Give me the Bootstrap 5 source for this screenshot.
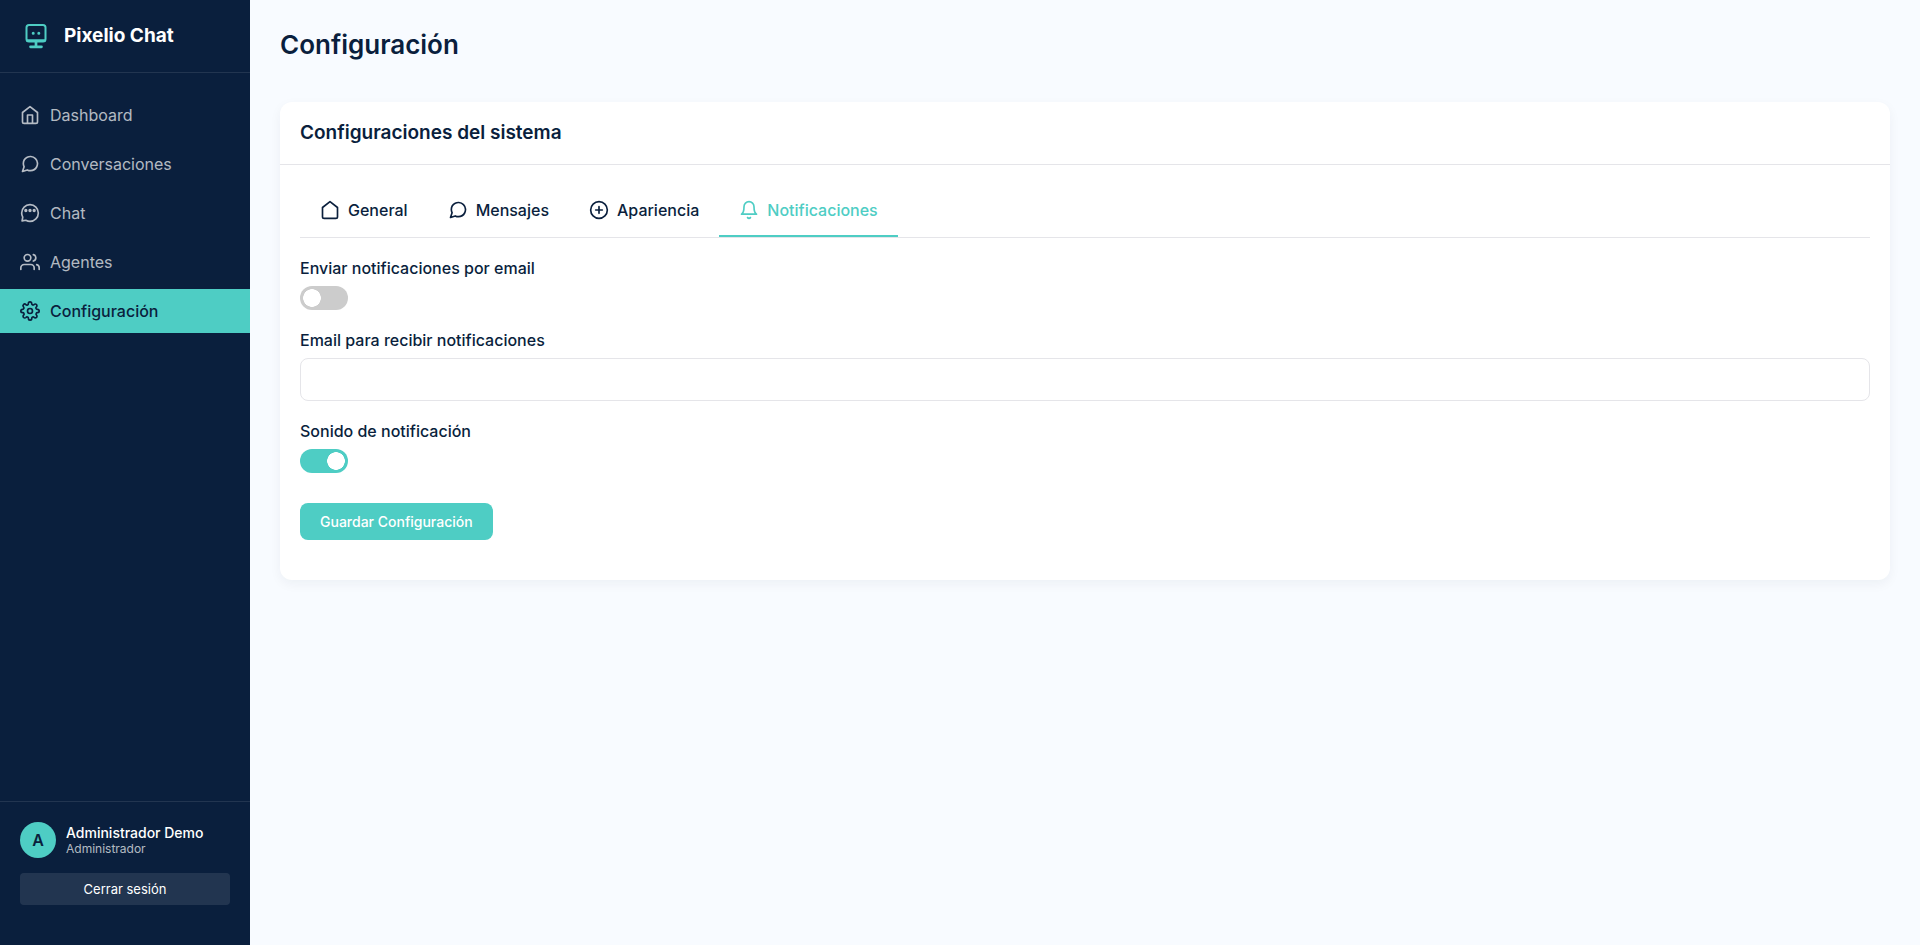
<!DOCTYPE html>
<html lang="es">
<head>
<meta charset="utf-8">
<meta name="viewport" content="width=device-width, initial-scale=1">
<title>Configuración - Pixelio Chat</title>
<link href="https://cdn.jsdelivr.net/npm/bootstrap@5.3.0/dist/css/bootstrap.min.css" rel="stylesheet">
<style>
:root { --navy: #0a1f3d; --teal: #4ecdc4; --line: #e5e5e9; }
body { font-family: Inter, "Liberation Sans", sans-serif; font-size: 16px; line-height: 24px; color: var(--navy); background: #f8fbff; }
svg { fill: none; stroke: currentColor; stroke-width: 2; stroke-linecap: round; stroke-linejoin: round; flex-shrink: 0; }
.sidebar { width: 250px; background: var(--navy); padding-bottom: 20px; }
.brand { height: 73px; padding: 0 20px; gap: 12px; border-bottom: 1px solid rgba(255,255,255,.1); }
.brand svg { color: var(--teal); }
.brand-name { font-size: 19px; font-weight: 700; color: #fff; }
.menu { gap: 5px; padding: 20px 0; }
.menu .nav-link { height: 44px; padding: 0 20px; gap: 10px; color: rgba(255,255,255,.7); }
.menu .nav-link.active { background: var(--teal); color: var(--navy); font-weight: 500; }
.account { padding: 20px; border-top: 1px solid rgba(255,255,255,.1); }
.profile { gap: 10px; }
.avatar { width: 36px; height: 36px; background: var(--teal); font-weight: 600; }
.user-name { padding-top: 2px; font-size: 14px; line-height: 16px; font-weight: 500; color: #fff; }
.user-role { font-size: 12px; line-height: 16px; color: rgba(255,255,255,.7); }
.logout { height: 32px; margin-top: 15px; padding: 2px 0 0; border: 0; border-radius: 4px; font-size: 13px; color: #fff; background: rgba(255,255,255,.1); }
.content { padding: 30px; min-width: 0; }
.page-title { font-size: 26px; line-height: 30px; font-weight: 600; margin-bottom: 42px; }
.panel { border: 0; border-radius: 12px; box-shadow: 0 4px 12px rgba(10,31,61,.05); color: inherit; }
.panel .card-header { height: 63px; padding: 0 20px; background: none; border-bottom: 1px solid var(--line); }
.panel h2 { font-size: 19px; line-height: 24px; font-weight: 600; }
.panel .card-body { padding: 20px 20px 40px; }
.tabs { border-bottom: 1px solid var(--line); margin-bottom: 18px; }
.tabs .nav-link { height: 52px; padding: 0 20px; gap: 8px; border: 0; border-bottom: 2px solid transparent; border-radius: 0; margin: 0; font-weight: 500; color: var(--navy); }
.tabs .nav-link.active { color: var(--teal); border-bottom-color: var(--teal); background: none; }
.field { margin-bottom: 18px; }
.field .form-label { font-weight: 500; margin-bottom: 6px; display: block; }
.form-switch.toggle { padding: 0; margin: 0; min-height: 24px; height: 24px; }
.form-switch.toggle .form-check-input { width: 48px; height: 24px; margin: 0; float: none; display: block; border: 0; background-color: #ccc; background-image: radial-gradient(circle closest-side, #fff 95%, transparent); background-size: 18px 18px; background-repeat: no-repeat; background-position: 3px center; }
.form-switch.toggle .form-check-input:checked { background-color: var(--teal); background-position: 27px center; }
.text-field { height: 43px; border: 1px solid var(--line); border-radius: 8px; }
.save { height: 37px; padding: 0 20px; border: 0; border-radius: 8px; background: var(--teal); color: #fff; font-size: 14px; font-weight: 500; margin-top: 12px; }
</style>
</head>
<body>
<div class="d-flex min-vh-100">
  <aside class="sidebar d-flex flex-column flex-shrink-0">
    <div class="brand d-flex align-items-center">
      <svg width="32" height="32" viewBox="0 0 32 32"><rect x="6.500" y="5" width="19" height="16.500" rx="2.500"/><path d="M7.500 20.500h17M16 22v5M10.500 26.800h11" stroke-width="2.700"/><path d="M13.200 13.300h.01M18.800 13.300h.01" stroke-width="3"/></svg>
      <span class="brand-name">Pixelio Chat</span>
    </div>
    <nav class="menu nav flex-column flex-nowrap flex-grow-1">
      <a class="nav-link d-flex align-items-center" href="#"><svg width="20" height="20" viewBox="0 0 24 24"><path d="m3 9 9-7 9 7v11a2 2 0 0 1-2 2H5a2 2 0 0 1-2-2zM9 22V12h6v10"/></svg>Dashboard</a>
      <a class="nav-link d-flex align-items-center" href="#"><svg width="20" height="20" viewBox="0 0 24 24"><path d="M21 11.500a8.380 8.380 0 0 1-.9 3.800 8.500 8.500 0 0 1-7.600 4.700 8.380 8.380 0 0 1-3.800-.9L3 21l1.900-5.700a8.380 8.380 0 0 1-.9-3.800 8.500 8.500 0 0 1 4.700-7.600 8.380 8.380 0 0 1 3.800-.9h.5a8.480 8.480 0 0 1 8 8z"/></svg>Conversaciones</a>
      <a class="nav-link d-flex align-items-center" href="#"><svg width="20" height="20" viewBox="0 0 24 24"><path d="M12 22c5.520 0 10-4.480 10-10S17.520 2 12 2 2 6.480 2 12c0 1.800.5 3.500 1.300 5L2.500 21.500 7 20.700c1.500.8 3.200 1.300 5 1.300z"/><path d="M7 9h.01M12 9h.01M17 9h.01" stroke-width="4"/></svg>Chat</a>
      <a class="nav-link d-flex align-items-center" href="#"><svg width="20" height="20" viewBox="0 0 24 24"><path d="M17 21v-2a4 4 0 0 0-4-4H5a4 4 0 0 0-4 4v2M23 21v-2a4 4 0 0 0-3-3.870M16 3.130a4 4 0 0 1 0 7.750"/><circle cx="9" cy="7" r="4"/></svg>Agentes</a>
      <a class="nav-link active d-flex align-items-center" href="#" aria-current="page"><svg width="20" height="20" viewBox="0 0 24 24"><circle cx="12" cy="12" r="3"/><path d="M19.400 15a1.650 1.650 0 0 0 .33 1.820l.06.06a2 2 0 1 1-2.830 2.830l-.06-.06a1.650 1.650 0 0 0-2.800 1.170V21a2 2 0 0 1-4 0v-.09A1.650 1.650 0 0 0 7.180 19.730l-.06.06a2 2 0 1 1-2.830-2.830l.06-.06A1.650 1.650 0 0 0 3.090 14H3a2 2 0 0 1 0-4h.09A1.650 1.650 0 0 0 4.270 7.180l-.06-.06a2 2 0 1 1 2.830-2.830l.06.06A1.650 1.650 0 0 0 10 3.090V3a2 2 0 0 1 4 0v.09a1.650 1.650 0 0 0 2.820 1.180l.06-.06a2 2 0 1 1 2.830 2.830l-.06.06A1.650 1.650 0 0 0 20.910 10H21a2 2 0 0 1 0 4h-.09a1.650 1.650 0 0 0-1.510 1z"/></svg>Configuración</a>
    </nav>
    <div class="account">
      <div class="profile d-flex align-items-center">
        <div class="avatar rounded-circle d-flex align-items-center justify-content-center">A</div>
        <div>
          <div class="user-name">Administrador Demo</div>
          <div class="user-role">Administrador</div>
        </div>
      </div>
      <button type="button" class="logout btn w-100">Cerrar sesión</button>
    </div>
  </aside>
  <main class="content flex-grow-1">
    <h1 class="page-title">Configuración</h1>
    <section class="panel card">
      <div class="card-header d-flex align-items-center"><h2 class="mb-0">Configuraciones del sistema</h2></div>
      <div class="card-body">
        <div class="tabs nav" role="tablist">
          <button type="button" role="tab" class="nav-link btn d-flex align-items-center"><svg width="20" height="20" viewBox="0 0 24 24"><path d="m3 9 9-7 9 7v11a2 2 0 0 1-2 2H5a2 2 0 0 1-2-2z"/></svg>General</button>
          <button type="button" role="tab" class="nav-link btn d-flex align-items-center"><svg width="20" height="20" viewBox="0 0 24 24"><path d="M21 11.500a8.380 8.380 0 0 1-.9 3.800 8.500 8.500 0 0 1-7.600 4.700 8.380 8.380 0 0 1-3.800-.9L3 21l1.900-5.700a8.380 8.380 0 0 1-.9-3.800 8.500 8.500 0 0 1 4.700-7.600 8.380 8.380 0 0 1 3.800-.9h.5a8.480 8.480 0 0 1 8 8z"/></svg>Mensajes</button>
          <button type="button" role="tab" class="nav-link btn d-flex align-items-center"><svg width="20" height="20" viewBox="0 0 24 24"><circle cx="12" cy="12" r="10"/><path d="M12 8v8M8 12h8"/></svg>Apariencia</button>
          <button type="button" role="tab" class="nav-link btn active d-flex align-items-center" aria-selected="true"><svg width="20" height="20" viewBox="0 0 24 24"><path d="M18 8A6 6 0 0 0 6 8c0 7-3 9-3 9h18s-3-2-3-9M13.730 21a2 2 0 0 1-3.460 0"/></svg>Notificaciones</button>
        </div>
        <form>
          <div class="field">
            <label class="form-label" for="notifyEmail">Enviar notificaciones por email</label>
            <div class="form-check form-switch toggle"><input class="form-check-input" type="checkbox" role="switch" id="notifyEmail"></div>
          </div>
          <div class="field">
            <label class="form-label" for="emailAddress">Email para recibir notificaciones</label>
            <input type="email" class="form-control text-field" id="emailAddress">
          </div>
          <div class="field">
            <label class="form-label" for="notifySound">Sonido de notificación</label>
            <div class="form-check form-switch toggle"><input class="form-check-input" type="checkbox" role="switch" id="notifySound" checked></div>
          </div>
          <button type="button" class="save btn">Guardar Configuración</button>
        </form>
      </div>
    </section>
  </main>
</div>
<script src="https://cdn.jsdelivr.net/npm/bootstrap@5.3.0/dist/js/bootstrap.bundle.min.js"></script>
</body>
</html>
